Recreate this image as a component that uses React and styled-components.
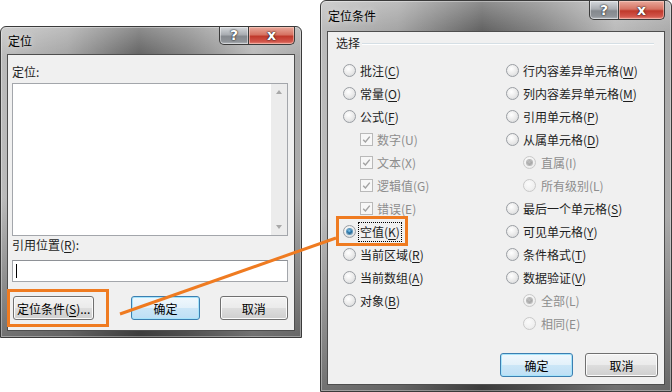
import React from 'react';
import styled, { createGlobalStyle, css } from 'styled-components';

const GlobalStyle = createGlobalStyle`
  html, body {
    margin: 0;
    padding: 0;
    background: #fff;
  }
  body {
    width: 672px;
    height: 392px;
    overflow: hidden;
    font-family: "Noto Sans CJK SC", "Microsoft YaHei", sans-serif;
    font-size: 12px;
    color: #1e1e1e;
  }
`;

const Desktop = styled.div`
  position: relative;
  width: 672px;
  height: 392px;
  display: flex;
  align-items: flex-start;
  gap: 18px;
`;

const Win = styled.div`
  box-sizing: border-box;
  width: ${p => p.$w}px;
  height: ${p => p.$h}px;
  margin-top: ${p => p.$top || 0}px;
  display: flex;
  flex-direction: column;
  padding: 0 6px 6px 6px;
  border: 1px solid #3a3a3a;
  border-radius: 6px 6px 0 0;
  background:
    linear-gradient(180deg, rgba(255,255,255,0.28) 0, rgba(255,255,255,0) 30px, rgba(0,0,0,0) 55%, rgba(0,0,0,0.4) 100%),
    linear-gradient(90deg, #bcbcbc 0%, #a4a4a4 22%, #626262 46%, #828282 62%, #bababa 84%, #aaaaaa 100%);
  box-shadow: inset 0 0 0 1px rgba(255,255,255,0.35);
`;

const TitleBar = styled.div`
  height: ${p => p.$h}px;
  flex: none;
  display: flex;
  align-items: center;
  justify-content: space-between;
  padding-left: 1px;
`;

const Title = styled.span`
  font-size: 12px;
  line-height: 16px;
  color: #000;
  text-shadow: 0 0 6px rgba(255,255,255,0.8);
`;

const Caption = styled.div`
  align-self: flex-start;
  display: flex;
`;

const CapButton = styled.div`
  box-sizing: border-box;
  width: ${p => p.$w}px;
  height: ${p => p.$h}px;
  display: flex;
  align-items: center;
  justify-content: center;
  padding-bottom: 1px;
  border: 1px solid #3b3b3b;
  border-top: none;
  color: #fff;
  font-family: "DejaVu Sans", sans-serif;
  font-weight: bold;
  font-size: 14px;
  line-height: 14px;
  text-shadow: 0 0 2px #222, 0 0 1px #000;
  ${p => p.$close ? css`
    border-radius: 0 0 5px 0;
    border-left: none;
    background: linear-gradient(180deg, #e9a99b 0%, #d67363 45%, #c0392b 55%, #d2554a 85%, #e7897c 100%);
    box-shadow: inset 0 0 0 1px rgba(255,220,210,0.5);
  ` : css`
    border-radius: 0 0 0 5px;
    background: linear-gradient(180deg, #d5d8dc 0%, #a9adb2 45%, #85898e 55%, #8f9398 85%, #b4b8bd 100%);
    box-shadow: inset 0 0 0 1px rgba(255,255,255,0.45);
  `}
`;

const Client = styled.div`
  box-sizing: border-box;
  flex: 1;
  display: flex;
  flex-direction: column;
  background: #f0f0f0;
  border: 1px solid #4e4e4e;
  padding: ${p => p.$pad};
`;

const FieldLabel = styled.div`
  line-height: 16px;
  margin: ${p => p.$m || 0};
`;

const U = styled.span`
  text-decoration: ${p => (p.$off ? 'none' : 'underline')};
  text-underline-offset: 2px;
`;

const ListBox = styled.div`
  box-sizing: border-box;
  height: 153px;
  display: flex;
  background: #fff;
  border: 1px solid #a3a6ab;
`;

const ListArea = styled.div`
  flex: 1;
`;

const ScrollTrack = styled.div`
  width: 16px;
  display: flex;
  flex-direction: column;
  justify-content: space-between;
  align-items: center;
  padding: 6px 0;
  background: #ececec;
`;

const Arrow = styled.div`
  width: 0;
  height: 0;
  border-left: 3.5px solid transparent;
  border-right: 3.5px solid transparent;
  ${p => p.$down
    ? css`border-top: 4px solid #a8a8a8;`
    : css`border-bottom: 4px solid #a8a8a8;`}
`;

const TextInput = styled.div`
  box-sizing: border-box;
  height: 22px;
  display: flex;
  align-items: center;
  padding-left: 3px;
  background: #fff;
  border: 1px solid #a3a6ab;
  border-top-color: #8e9196;
`;

const Caret = styled.div`
  width: 1px;
  height: 14px;
  background: #000;
`;

const ButtonRow = styled.div`
  display: flex;
  justify-content: ${p => p.$end ? 'flex-end' : 'flex-start'};
  gap: ${p => p.$gap || 10}px;
  margin: ${p => p.$m || 0};
`;

const Button = styled.div`
  box-sizing: border-box;
  width: ${p => p.$w}px;
  height: 24px;
  margin-right: ${p => p.$mr || 0}px;
  display: flex;
  align-items: center;
  justify-content: center;
  border-radius: 3px;
  color: #000;
  ${p => p.$default ? css`
    border: 1px solid #3c7fb1;
    box-shadow: inset 0 0 0 1px #a6e4fb;
    background: linear-gradient(180deg, #f0f8fd 0%, #e3f1fa 48%, #cbe6f7 52%, #bedff5 100%);
  ` : css`
    border: 1px solid #707070;
    box-shadow: inset 0 0 0 1px #fbfbfb;
    background: linear-gradient(180deg, #f3f3f3 0%, #ebebeb 48%, #dddddd 52%, #cfcfcf 100%);
  `}
`;

const GroupHeader = styled.div`
  display: flex;
  align-items: center;
  padding: 0 4px 0 8px;
  line-height: 16px;
`;

const GroupLine = styled.div`
  flex: 1;
  margin-left: 2px;
  margin-top: 2px;
  border-top: 1px solid #d5dfe5;
  border-bottom: 1px solid #fff;
`;

const Options = styled.div`
  display: grid;
  grid-template-columns: 163px 1fr;
  padding-left: 15px;
  margin-top: 8px;
`;

const Column = styled.div`
  display: flex;
  flex-direction: column;
`;

const Row = styled.div`
  height: 23px;
  display: flex;
  align-items: center;
  padding-left: ${p => (p.$sub ? 17 : 0)}px;
  color: ${p => (p.$disabled ? '#8d8d8d' : '#1e1e1e')};
  line-height: 16px;
`;

const Radio = styled.span`
  box-sizing: border-box;
  width: 13px;
  height: 13px;
  flex: none;
  border-radius: 50%;
  margin-right: ${p => (p.$sub ? 5 : 4)}px;
  display: flex;
  align-items: center;
  justify-content: center;
  border: 1px solid ${p => (p.$disabled ? '#c9c9c9' : '#9a9ea3')};
  background: ${p => p.$disabled
    ? 'radial-gradient(circle at 40% 35%, #fbfbfb 0, #f0f0f0 60%, #e4e4e4 100%)'
    : 'radial-gradient(circle at 40% 35%, #ffffff 0, #e9e9e9 55%, #cfd2d5 100%)'};
  &::after {
    content: '';
    display: ${p => (p.$checked ? 'block' : 'none')};
    width: 5px;
    height: 5px;
    border-radius: 50%;
    background: ${p => p.$disabled
      ? 'radial-gradient(circle at 45% 40%, #c4c4c4 0, #8f8f8f 100%)'
      : 'radial-gradient(circle at 45% 35%, #8fd0f2 0, #2a78ad 45%, #0d3d60 100%)'};
    box-shadow: 0 0 0 1px ${p => (p.$disabled ? '#b8b8b8' : '#5f98bd')};
  }
`;

const CheckBox = styled.span`
  box-sizing: border-box;
  width: 13px;
  height: 13px;
  flex: none;
  margin-right: 4px;
  display: flex;
  align-items: center;
  justify-content: center;
  border: 1px solid #b9b9b9;
  background: #f7f7f7;
`;

const Focus = styled.span`
  outline: 1px dotted #000;
  outline-offset: 1px;
`;

const Overlay = styled.svg`
  position: absolute;
  left: 0;
  top: 0;
  width: 672px;
  height: 392px;
  pointer-events: none;
`;

const leftOptions = [
  { text: '批注', key: 'C' },
  { text: '常量', key: 'O' },
  { text: '公式', key: 'F' },
  { text: '数字', key: 'U', check: true, sub: true, disabled: true },
  { text: '文本', key: 'X', check: true, sub: true, disabled: true },
  { text: '逻辑值', key: 'G', check: true, sub: true, disabled: true },
  { text: '错误', key: 'E', check: true, sub: true, disabled: true },
  { text: '空值', key: 'K', checked: true, focus: true },
  { text: '当前区域', key: 'R' },
  { text: '当前数组', key: 'A' },
  { text: '对象', key: 'B' },
];

const rightOptions = [
  { text: '行内容差异单元格', key: 'W' },
  { text: '列内容差异单元格', key: 'M' },
  { text: '引用单元格', key: 'P' },
  { text: '从属单元格', key: 'D' },
  { text: '直属', key: 'I', sub: true, disabled: true, checked: true },
  { text: '所有级别', key: 'L', sub: true, disabled: true },
  { text: '最后一个单元格', key: 'S' },
  { text: '可见单元格', key: 'Y' },
  { text: '条件格式', key: 'T' },
  { text: '数据验证', key: 'V' },
  { text: '全部', key: 'L', sub: true, disabled: true, checked: true },
  { text: '相同', key: 'E', sub: true, disabled: true },
];

const Check = () => (
  <svg width="9" height="9" viewBox="0 0 9 9">
    <path d="M1.2 4.8 L3.4 7 L7.8 1.6" fill="none" stroke="#a2a2a2" strokeWidth="1.4" />
  </svg>
);

const Option = ({ o }) => {
  const label = (
    <span>
      {o.text}(<U $off={o.disabled}>{o.key}</U>)
    </span>
  );
  return (
    <Row $sub={o.sub} $disabled={o.disabled}>
      {o.check ? (
        <CheckBox><Check /></CheckBox>
      ) : (
        <Radio $sub={o.sub} $disabled={o.disabled} $checked={o.checked} />
      )}
      {o.focus ? <Focus>{label}</Focus> : label}
    </Row>
  );
};

const CaptionButtons = ({ h }) => (
  <Caption>
    <CapButton $w={30} $h={h}>?</CapButton>
    <CapButton $w={46} $h={h} $close>x</CapButton>
  </Caption>
);

const App = () => {
  return (
    <>
      <GlobalStyle />
      <Desktop>
        <Win $w={302} $h={312} $top={26}>
          <TitleBar $h={27}>
            <Title>定位</Title>
            <CaptionButtons h={18} />
          </TitleBar>
          <Client $pad="9px 6px 9px 4px">
            <FieldLabel $m="0 0 3px">定位:</FieldLabel>
            <ListBox>
              <ListArea />
              <ScrollTrack>
                <Arrow />
                <Arrow $down />
              </ScrollTrack>
            </ListBox>
            <FieldLabel $m="1px 0 7px">引用位置(<U>R</U>):</FieldLabel>
            <TextInput><Caret /></TextInput>
            <ButtonRow $m="14px 0 0 1px" $gap={0}>
              <Button $w={88} $mr={27}>定位条件(<U>S</U>)...</Button>
              <Button $w={74} $mr={10} $default>确定</Button>
              <Button $w={74}>取消</Button>
            </ButtonRow>
          </Client>
        </Win>

        <Win $w={352} $h={392}>
          <TitleBar $h={30}>
            <Title>定位条件</Title>
            <CaptionButtons h={19} />
          </TitleBar>
          <Client $pad="3px 6px 7px 0">
            <GroupHeader>
              选择
              <GroupLine />
            </GroupHeader>
            <Options>
              <Column>
                {leftOptions.map(o => <Option key={o.text} o={o} />)}
              </Column>
              <Column>
                {rightOptions.map(o => <Option key={o.text} o={o} />)}
              </Column>
            </Options>
            <ButtonRow $end $gap={12} $m="auto 0 0">
              <Button $w={73} $default>确定</Button>
              <Button $w={73}>取消</Button>
            </ButtonRow>
          </Client>
        </Win>

        <Overlay viewBox="0 0 672 392">
          <rect x="8.5" y="290.5" width="99" height="35" fill="none" stroke="#ef7b21" strokeWidth="3" />
          <rect x="337.5" y="217.5" width="69" height="27" fill="none" stroke="#ef7b21" strokeWidth="3" />
          <line x1="120" y1="314" x2="336" y2="238" stroke="#ef7b21" strokeWidth="3" />
        </Overlay>
      </Desktop>
    </>
  );
};

export default App;
